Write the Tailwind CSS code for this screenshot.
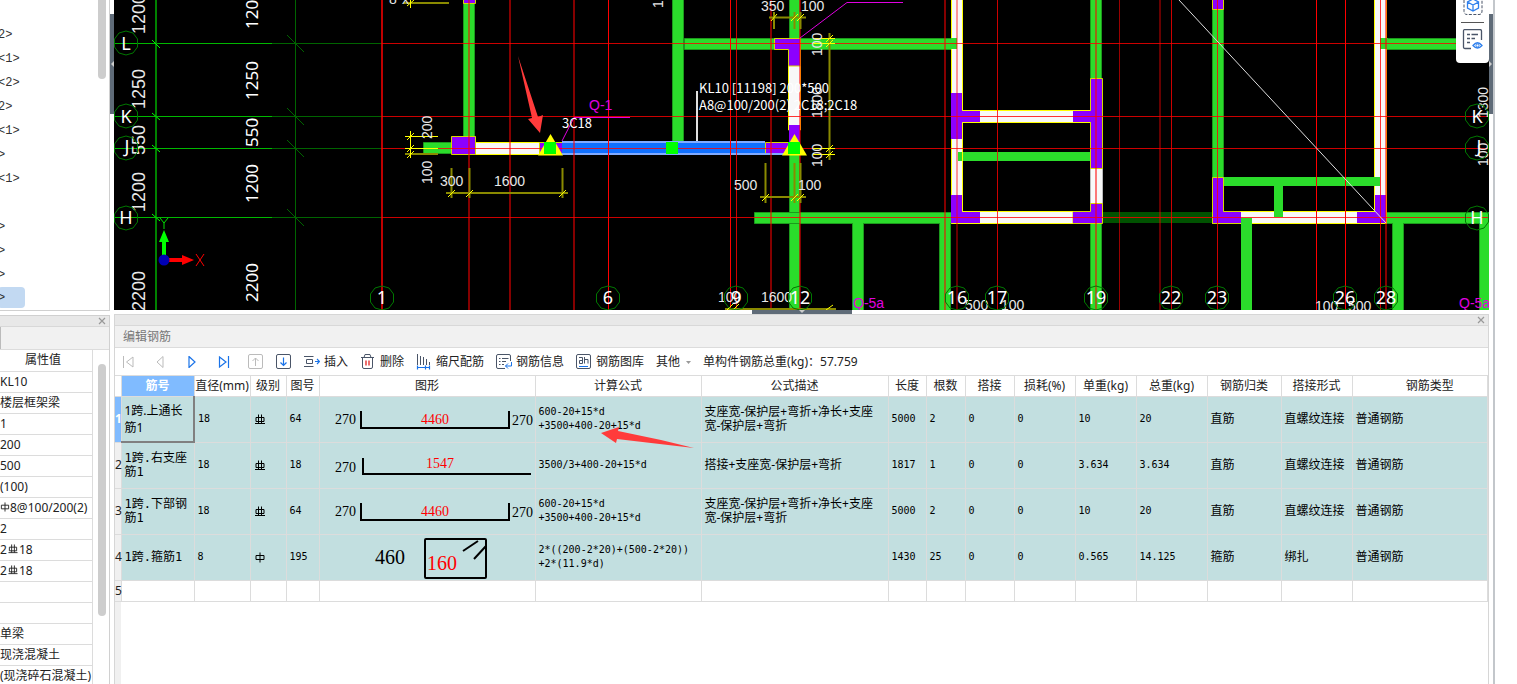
<!DOCTYPE html>
<html lang="zh-CN">
<head>
<meta charset="utf-8">
<title>编辑钢筋</title>
<script src="https://cdn.jsdelivr.net/npm/@tailwindcss/browser@4"></script>
</head>
<body class="bg-white">
<svg width="0" height="0" class="absolute" aria-hidden="true">
  <symbol id="g3" viewBox="0 0 10 11"><path d="M1 3.500H9V7.500H1ZM3.500 0.500V9.500M6.500 0.500V9.500M0 9.500H10" fill="none" stroke="currentColor"/></symbol>
  <symbol id="g1" viewBox="0 0 10 11"><path d="M1 3.500H9V7.500H1ZM5 0.500V10.500" fill="none" stroke="currentColor"/></symbol>
  <symbol id="u64" viewBox="0 0 216 45"><path d="M41 14V31H189V14" fill="none" stroke="#000" stroke-width="2"/></symbol>
</svg>
<div class="flex h-screen overflow-hidden font-['Noto_Sans','Noto_Sans_CJK_SC',sans-serif] text-xs text-[#222]">

  <aside class="flex w-[110px] shrink-0 flex-col overflow-hidden">
    <div class="relative h-[311px] shrink-0 border-r border-b border-[#d0d0d0] bg-white">
      <ul class="pt-[23px] font-['Liberation_Mono','Noto_Sans_CJK_SC',monospace] leading-6 text-[#333]">
        <li class="h-6 -ml-0.5">2&gt;</li>
        <li class="h-6 -ml-0.5">&lt;1&gt;</li>
        <li class="h-6 -ml-0.5">&lt;2&gt;</li>
        <li class="h-6 -ml-0.5">2&gt;</li>
        <li class="h-6 -ml-0.5">&lt;1&gt;</li>
        <li class="h-6 -ml-0.5">&gt;</li>
        <li class="h-6 -ml-0.5">&lt;1&gt;</li>
        <li class="h-6 -ml-0.5"></li>
        <li class="h-6 -ml-0.5">&gt;</li>
        <li class="h-6 -ml-0.5">&gt;</li>
        <li class="h-6 -ml-0.5">&gt;</li>
        <li class="h-[21px] w-[27px] -ml-0.5 rounded bg-[#c2d9f2] leading-[22px]">&gt;</li>
      </ul>
      <div class="absolute top-0 right-[3px] h-[79px] w-2 rounded-b-full bg-[#cdcdcd]"></div>
    </div>
    <div class="mt-1 flex min-h-0 flex-1 flex-col border-t border-r border-[#d0d0d0]">
      <div class="flex h-[11px] shrink-0 items-center justify-end border-b border-[#d8d8d8] bg-[#e8e8e8] pr-[3px]">
        <button aria-label="关闭"><svg class="size-2" viewBox="0 0 8 8"><path d="M1 1L7 7M7 1L1 7" stroke="#999" stroke-width="1.200"/></svg></button>
      </div>
      <div class="h-[23px] shrink-0 border-b border-[#dcdcdc] bg-[#f1f1f1]"><div class="h-full w-px bg-[#bbb]"></div></div>
      <div class="flex min-h-0 flex-1 justify-between overflow-hidden">
        <table class="h-fit w-[93px] table-fixed border-collapse whitespace-nowrap [&_td]:h-[21px] [&_td]:border-r [&_td]:border-b [&_td]:border-[#dcdcdc] [&_td]:p-0 [&_td]:leading-5">
          <thead><tr><th class="h-[21px] border-r border-b border-[#dcdcdc] p-0 pr-1.5 text-center font-normal leading-5">属性值</th></tr></thead>
          <tbody>
            <tr><td>KL10</td></tr>
            <tr><td>楼层框架梁</td></tr>
            <tr><td>1</td></tr>
            <tr><td>200</td></tr>
            <tr><td>500</td></tr>
            <tr><td>(100)</td></tr>
            <tr><td><svg class="inline size-[10px] -mt-0.5"><use href="#g1"/></svg>8@100/200(2)</td></tr>
            <tr><td>2</td></tr>
            <tr><td>2<svg class="-mt-0.5 inline h-[10px] w-3"><use href="#g3"/></svg>18</td></tr>
            <tr><td>2<svg class="-mt-0.5 inline h-[10px] w-3"><use href="#g3"/></svg>18</td></tr>
            <tr><td></td></tr>
            <tr><td></td></tr>
            <tr><td>单梁</td></tr>
            <tr><td>现浇混凝土</td></tr>
            <tr><td>(现浇碎石混凝土)</td></tr>
          </tbody>
        </table>
        <div class="mt-3.5 mr-[3px] h-[252px] w-2 shrink-0 rounded-full bg-[#cdcdcd]"></div>
      </div>
    </div>
  </aside>

  <div class="w-1 shrink-0 pt-3.5">
    <button aria-label="收起左侧" class="flex h-[100px] w-full items-center bg-[#5f6b78]"><svg class="h-2 w-1" viewBox="0 0 4 8"><path d="M4 1V7L1 4Z" fill="#ccc"/></svg></button>
  </div>

  <main class="flex min-w-0 flex-1 flex-col">
    <section class="relative h-[310px] shrink-0 overflow-hidden bg-black" aria-label="绘图区">
      <svg class="block h-full w-full">
        <g transform="translate(-114 0)">
          <g fill="none" stroke="#006400">
            <path d="M272 43.500H382M272 116.500H382M272 148.500H382M272 217.500H382M295.500 0V310"/>
            <path d="M287 35L304 52M287 108L304 125M287 140L304 157M287 209L304 226"/>
            <path d="M114 43.500H272M114 116.500H272M114 148.500H272M114 217.500H272" stroke="#00b800"/>
            <path d="M156 0V310" stroke="#008200" stroke-width="2"/>
            <path d="M152 40L160 48M152 113L160 120M152 145L160 152M152 214L160 221" stroke="#00ff00"/>
          </g>
          <!-- beams -->
          <g fill="#2bdc2b" stroke="#1c9a1c">
            <path d="M463.500 3.500H474.500V136.500H463.500ZM672.500 -1H683.500V148.500H672.500ZM684.500 38.500H957.500V49.500H684.500ZM789.500 -1H799.500V311H789.500ZM423.500 142.500H452.500V153.500H423.500Z"/>
            <path d="M754.500 212.500H957.500V223.500H754.500Z"/>
            <path d="M1090.500 -1H1101.500V78.500H1090.500ZM1090.500 223.500H1101.500V311H1090.500ZM1212.500 9.500H1223.500V177.500H1212.500Z"/>
            <path d="M1386.500 212.500H1492V223.500H1386.500ZM1386.500 38.500H1492V49.500H1386.500Z"/>
            <path d="M852.500 223V311M863.500 223V311M939.500 223V311M950.500 223V311M1392.500 223V311M1403.500 223V311M1479.500 223V311" fill="none"/>
            <path d="M853 222H863V311H853ZM940 222H950V311H940ZM1393 222H1403V311H1393ZM1480 222H1492V311H1480ZM789 212.900H800V223.100H789Z" stroke="none"/>
          </g>
          <path d="M1102 212H1212V223H1102Z" fill="#005200"/>
          <!-- walls -->
          <g fill="#f8f8f8" stroke="#ffff00">
            <path d="M475.500 142.500H545V154.500H475.500ZM788.500 60H800.500V130H788.500Z"/>
            <path d="M951.500 -1H962.500V110.500H1090.500V122.500H962.500V211.500H1090.500V223.500H951.500Z"/>
            <path d="M1090.500 168.500H1102.500V203.500H1090.500Z" stroke="#bbb"/>
            <path d="M1374.500 -1H1386.500V223.500H1212.500V211.500H1374.500Z"/>
          </g>
          <path d="M963 123H1090V211H963Z" fill="#000"/>
          <path d="M958 152H1091V161H958ZM951 38H957V49H951ZM1223 177H1380V186H1223ZM1274 186H1283V217H1274ZM1241 218H1252V310H1241ZM1380 38H1388V49H1380Z" fill="#2bdc2b"/>
          <path d="M962.500 123V211" stroke="#ffff00"/>
          <!-- edge columns -->
          <g fill="#8c00ff">
            <g stroke="#d8d800">
              <path d="M463.500 -1H475.500V3.500H463.500ZM451.500 136.500H475.500V154.500H451.500ZM539.500 142.500H562.500V154.500H539.500Z"/>
              <path d="M774.500 38.500H800.500V66H788.500V49.500H774.500Z"/>
              <path d="M765.500 142.500H790V154.500H765.500Z"/>
              <path d="M1090.500 78.500H1102.500V168.500H1090.500ZM1212.500 -1H1223.500V9.500H1212.500ZM1212.500 177.500H1223.500V211.500H1240V223.500H1212.500ZM1090.500 203.500H1102.500V223.500H1073V211.500H1090.500Z"/>
            </g>
            <path d="M789 125H800V142H789ZM951 93H962V139H951ZM962 111H980V122H962ZM951 195H962V223H951ZM962 212H980V223H962ZM1073 111H1093V122H1073ZM1073 212H1093V223H1073ZM1375 195H1386V223H1375ZM1357 212H1375V223H1357ZM1221 212H1241V223H1221Z"/>
          </g>
          <!-- selected beam -->
          <path d="M562 142H765V154H562Z" fill="#1070ff"/>
          <path d="M562 142H765M562 154H790" stroke="#80aaff" stroke-width="2"/>
          <!-- axis grid -->
          <g stroke="#ff0000" fill="none">
            <path d="M382 43.500H1489M382 116.500H1489M382 148.500H1489M382 217.500H1489" stroke-opacity=".8"/>
            <path d="M736.500 0V310M957 0V310M1160 0V310M1217.500 0V310M1380.500 0V310M997.500 0V310M1171.500 0V310" stroke-opacity=".8"/>
            <path d="M382 0V310" stroke-width="2" stroke-opacity=".75"/>
            <path d="M469 0V310M510 0V310M574 0V310M771 0V310M800 0V310M945 0V310M1096 0V310M1386 0V310" stroke-width="2" stroke-opacity=".52"/>
            <path d="M1119.500 0V310" stroke-opacity=".6"/>
            <path d="M608.500 0V310M730.500 0V310M1316.500 0V310M1345.500 0V310"/>
          </g>
          <path d="M1179 0L1386 223" stroke="#ddd"/>
          <!-- dimension lines -->
          <g stroke="#8a8a00" stroke-width="2" fill="none">
            <path d="M404 3H449M446 193H568M451.500 168V198M469.500 168V198M562.500 168V198"/>
            <path d="M760 197H806M765.500 163V203M794.500 163V203M800.500 163V203M769 17.500H806M774 12V29M794.500 12V29M800.500 12V29"/>
            <path d="M829.500 33V160M725 309H836M405 154H438" />
          </g>
          <g stroke="#ffff00" fill="none">
            <path d="M410.500 131V158M405 136.500H438M405 148.500H438M410.500 0V8M813 38.500H835M813 43.500H835M813 148.500H835M813 154.500H835"/>
            <path d="M448 197L455 190M466 197L473 190M559 197L566 190M407 140L414 133M407 152L414 145M407 158L414 151M407 6L414 0M762 201L769 194M791 201L798 194M797 201L804 194M771 21L777 14M791 21L798 14M797 21L804 14M826 42L833 35M826 47L833 40M826 152L833 145M826 158L833 151M727 310L733 304M733 310L739 304M826 310L833 305"/>
          </g>
          <!-- section marks -->
          <g fill="#ffff00"><path d="M550.500 134L563 155.500H538Z"/><path d="M794.500 134L807 155.500H782Z"/></g>
          <path d="M544 142H556V154H544ZM788 142H800V154H788ZM666 142H678V154H666Z" fill="#00ff00"/>
          <g stroke="#e000e0" fill="none"><path d="M562 141L574 117.500H630M800 38L847 2.500H903"/></g>
          <path d="M697 91V141" stroke="#e0e0e0" stroke-width="2"/>

          <!-- dimension text -->
          <g fill="#e8e8e8" font-family="'Liberation Sans',sans-serif" font-size="18">
            <text transform="translate(145 34) rotate(-90)">1200</text>
            <text transform="translate(145 109) rotate(-90)">1250</text>
            <text transform="translate(145 155) rotate(-90)">550</text>
            <text transform="translate(145 212) rotate(-90)">1200</text>
            <text transform="translate(145 311) rotate(-90)">2200</text>
          </g>
          <g fill="#e8e8e8" font-family="'Liberation Sans',sans-serif" font-size="14">
            <text transform="translate(432 139) rotate(-90)">200</text>
            <text transform="translate(432 184) rotate(-90)">100</text>
            <text transform="translate(663 8) rotate(-90)">100</text>
            <text transform="translate(822 56) rotate(-90)">100</text>
            <text transform="translate(822 118) rotate(-90)">1800</text>
            <text transform="translate(822 167) rotate(-90)">100</text>
            <text transform="translate(1488 118) rotate(-90)">1300</text>
            <text transform="translate(1488 166) rotate(-90)">100</text>
            <text x="440" y="186">300</text><text x="494" y="186">1600</text>
            <text x="734" y="190">500</text><text x="798" y="190">100</text>
            <text x="761" y="11">350</text><text x="801" y="11">100</text>
            <text x="718" y="302">100</text><text x="761" y="302">1600</text>
            <text x="965" y="310">500</text><text x="1001" y="310">100</text>
            <text x="1315" y="311">100</text><text x="1348" y="311">500</text>
            <text x="389" y="4">8</text><text x="402" y="4">x</text>
          </g>
          <g fill="#e000e0" font-family="'Liberation Sans',sans-serif" font-size="14">
            <text x="589" y="110">Q-1</text><text x="853" y="308">Q-5a</text><text x="1459" y="308">Q-5a</text>
          </g>
          <g fill="#fff" font-family="'Noto Sans',sans-serif" font-size="17">
            <text transform="translate(258 29) rotate(-90)">120</text>
            <text transform="translate(258 100) rotate(-90)">1250</text>
            <text transform="translate(258 147) rotate(-90)">550</text>
            <text transform="translate(258 203) rotate(-90)">1200</text>
            <text transform="translate(258 302) rotate(-90)">2200</text>
          </g>
          <g fill="#fff" font-family="'Noto Sans CJK SC',sans-serif" font-size="13">
            <text x="562" y="128">3C18</text>
            <text x="699" y="93">KL10 [11198] 200*500</text>
            <text x="699" y="110">A8@100/200(2) 2C18;2C18</text>
          </g>
          <!-- axis bubbles -->
          <symbol id="bub" viewBox="0 0 26 26"><path d="M13 1L20 3L24.500 9V17L20 23L13 25L6 23L1.500 17V9L6 3Z" fill="none" stroke="#007800"/></symbol>
          <g>
            <use href="#bub" x="113" y="30" width="26" height="26"/><use href="#bub" x="113" y="103" width="26" height="26"/>
            <use href="#bub" x="113" y="135" width="26" height="26"/><use href="#bub" x="113" y="205" width="26" height="26"/>
            <use href="#bub" x="369" y="285" width="26" height="26"/><use href="#bub" x="595" y="285" width="26" height="26"/>
            <use href="#bub" x="723" y="285" width="26" height="26"/><use href="#bub" x="787" y="285" width="26" height="26"/>
            <use href="#bub" x="944" y="285" width="26" height="26"/><use href="#bub" x="984" y="285" width="26" height="26"/>
            <use href="#bub" x="1083" y="285" width="26" height="26"/><use href="#bub" x="1158" y="285" width="26" height="26"/>
            <use href="#bub" x="1204" y="285" width="26" height="26"/><use href="#bub" x="1332" y="285" width="26" height="26"/>
            <use href="#bub" x="1373" y="285" width="26" height="26"/>
            <use href="#bub" x="1464" y="103" width="26" height="26"/><use href="#bub" x="1464" y="135" width="26" height="26"/><use href="#bub" x="1464" y="205" width="26" height="26"/>
          </g>
          <g fill="#fff" font-family="'Noto Sans',sans-serif" font-size="18" text-anchor="middle">
            <text x="126" y="50">L</text><text x="126" y="123">K</text><text x="127" y="153">J</text><text x="126" y="224">H</text>
            <text x="382" y="304">1</text><text x="608" y="304">6</text><text x="736" y="304">9</text><text x="800" y="304">12</text>
            <text x="957" y="304">16</text><text x="997" y="304">17</text><text x="1096" y="304">19</text><text x="1171" y="304">22</text>
            <text x="1217" y="304">23</text><text x="1345" y="304">26</text><text x="1386" y="304">28</text>
            <text x="1477" y="123">K</text><text x="1479" y="153">J</text><text x="1477" y="224">H</text>
          </g>
          <!-- coordinate axes -->
          <path d="M164 258V242" stroke="#00ff00" stroke-width="4"/><path d="M164 230L169 242H159Z" fill="#00ff00"/>
          <path d="M168 260H183" stroke="#ff0000" stroke-width="4"/><path d="M194 260L182 265V255Z" fill="#ff0000"/>
          <circle cx="164" cy="260" r="5.500" fill="#0000b4"/>
          <path d="M160 218L164 223L168 218M164 223V229" fill="none" stroke="#00e000"/>
          <path d="M196 254L204 266M204 254L196 266" stroke="#ff0000"/>
          <path d="M518 56L538 117L543 115L540 133L528 119L532 118Z" fill="#ff3b3b"/>
        </g>
      </svg>
      <div class="absolute top-0 right-0 flex h-[63px] w-[33px] flex-col items-center rounded-b bg-white shadow">
        <button aria-label="三维"><svg class="h-4 w-5" viewBox="0 0 20 16" fill="none"><path d="M1 0V11Q1 14.500 4 14.500H16Q19 14.500 19 11V0" stroke="#4a5568" stroke-dasharray="3 1.500"/><path d="M10 -1L15.500 2V8L10 11L4.500 8V2ZM4.500 2L10 5L15.500 2M10 5V11" stroke="#2f80ed" stroke-width="1.300"/></svg></button>
        <div class="mt-1.5 h-px w-[23px] bg-[#555]"></div>
        <button aria-label="显示设置" class="mt-1.5"><svg class="h-[22px] w-[21px]" viewBox="0 0 21 22" fill="none"><path d="M9 19.500H3Q1.500 19.500 1.500 18V2Q1.500 0.500 3 0.500H18Q19.500 0.500 19.500 2V11" stroke="#4a5568" stroke-width="1.300"/><path d="M5 5.500H8M9.500 5.500H16M5 9.500H8M9.500 9.500H13M5 13.500H8" stroke="#4a5568" stroke-width="1.300"/><path d="M11 16.500Q15.500 11 20 16.500Q15.500 21.500 11 16.500Z" stroke="#2f80ed" stroke-width="1.300"/><circle cx="15.500" cy="16.500" r="1.500" stroke="#2f80ed"/></svg></button>
      </div>
    </section>

    <button aria-label="收起下方" class="ml-[638px] flex h-1 w-[100px] shrink-0 items-center justify-center bg-[#5f6b78]"><svg class="h-1 w-2" viewBox="0 0 8 4"><path d="M1 0H7L4 3Z" fill="#ccc"/></svg></button>

    <section class="relative flex min-h-0 flex-1 flex-col border-x border-t border-[#d6d6d6]">
      <div class="flex h-[11px] shrink-0 items-center justify-end border-b border-[#d8d8d8] bg-[#e8e8e8] pr-[3px]">
        <button aria-label="关闭"><svg class="size-2" viewBox="0 0 8 8"><path d="M1 1L7 7M7 1L1 7" stroke="#999" stroke-width="1.200"/></svg></button>
      </div>
      <h1 class="h-[22px] shrink-0 border-b border-[#dcdcdc] bg-[#f1f1f1] pl-2 leading-[22px] text-[#777]">编辑钢筋</h1>
      <div class="flex h-7 shrink-0 items-center gap-3 border-b border-[#dcdcdc] pt-px pl-[7px] whitespace-nowrap">
        <div class="mr-1.5 flex gap-5">
          <button aria-label="首条"><svg class="size-3" viewBox="0 0 12 12" fill="none" stroke="#bbb"><path d="M1.500 0V12M11 1L4.500 6L11 11Z"/></svg></button>
          <button aria-label="上一条"><svg class="size-3" viewBox="0 0 12 12" fill="none" stroke="#bbb"><path d="M9 0.500L3 6L9 11.500Z"/></svg></button>
          <button aria-label="下一条"><svg class="size-3" viewBox="0 0 12 12" fill="none" stroke="#1a73e8" stroke-width="1.200"><path d="M3 0.500L9 6L3 11.500Z"/></svg></button>
          <button aria-label="末条"><svg class="size-3" viewBox="0 0 12 12" fill="none" stroke="#1a73e8" stroke-width="1.200"><path d="M10.500 0V12M1.500 1L8 6L1.500 11Z"/></svg></button>
        </div>
        <button aria-label="上移"><svg class="size-4" viewBox="0 0 16 16" fill="none" stroke="#bbb"><rect x=".5" y=".5" width="14" height="14" rx="1.500"/><path d="M7.500 12V4M4.500 7L7.500 4L10.500 7"/></svg></button>
        <button aria-label="下移"><svg class="size-4" viewBox="0 0 16 16" fill="none"><rect x=".5" y=".5" width="14" height="14" rx="1.500" stroke="#4a5568"/><path d="M7.500 3.500V11.500M4.500 8.500L7.500 11.500L10.500 8.500" stroke="#1a73e8" stroke-width="1.200"/></svg></button>
        <button class="flex items-center gap-1"><svg class="size-4" viewBox="0 0 16 16" fill="none"><path d="M0 2.500H9.500M2.500 5.500H8.500V9.500H2.500ZM0 12.500H9.500" stroke="#4a5568"/><path d="M11 7.500H15M13 5L15.500 7.500L13 10" stroke="#1a73e8" stroke-width="1.200"/></svg>插入</button>
        <button class="flex items-center gap-1"><svg class="size-4" viewBox="0 0 16 16" fill="none"><path d="M1 3.500H14M4 3.500L5 .500H10L11 3.500M2.500 3.500V13Q2.500 14.500 4 14.500H11Q12.500 14.500 12.500 13V3.500" stroke="#4a5568"/><path d="M6 6.500V11.500M9 6.500V11.500" stroke="#e02020" stroke-width="1.300"/></svg>删除</button>
        <button class="flex items-center gap-1"><svg class="size-4" viewBox="0 0 16 16" fill="none"><path d="M1.500 0V11M4.500 2V11M7.500 3V11M10.500 5V11M13.500 8V11" stroke="#4a5568"/><path d="M1 13.500H14M1.500 11.500V15.500M9.500 11.500V15.500M13.500 11.500V15.500" stroke="#1a73e8" stroke-width="1.200"/></svg>缩尺配筋</button>
        <button class="flex items-center gap-1"><svg class="size-4" viewBox="0 0 16 16" fill="none"><path d="M9 14.500H2Q.500 14.500 .500 13V2Q.500 .500 2 .500H13Q14.500 .500 14.500 2V7" stroke="#4a5568"/><path d="M3 4.500H4.500M6 4.500H12.500M3 7.500H4.500M6 7.500H10M3 10.500H4.500M6 10.500H8" stroke="#4a5568"/><path d="M15.500 8V12H9.500M12 9.500L9.500 12L12 14.500" stroke="#1a73e8"/></svg>钢筋信息</button>
        <button class="flex items-center gap-1"><svg class="size-4" viewBox="0 0 16 16" fill="none"><rect x=".5" y=".5" width="14" height="14" rx="1.500" stroke="#4a5568"/><path d="M3 3.500H6.500V9.500H3.500V6.500H6.500M8.500 3V9.500M8.500 5.500H12V9.500" stroke="#4a5568"/><path d="M3 12.500H12" stroke="#1a73e8"/></svg>钢筋图库</button>
        <button class="flex items-center gap-1.5">其他<svg class="h-[3px] w-[5px]" viewBox="0 0 5 3"><path d="M0 0H5L2.500 3Z" fill="#999"/></svg></button>
        <span>单构件钢筋总重(kg)：57.759</span>
      </div>
      <div class="min-h-0 flex-1 bg-linear-to-r from-[#f0f0f0] from-[6px] to-white to-[6px]">
        <table class="w-full table-fixed border-collapse bg-white [&_td]:border-r [&_td]:border-b [&_td]:border-[#dcdcdc] [&_td]:px-[3px] [&_td]:py-0 [&_td]:text-black [&_th]:border-r [&_th]:border-b [&_th]:border-[#dcdcdc] [&_th]:p-0 [&_th]:whitespace-nowrap [&_th]:font-normal">
          <colgroup><col class="w-[6px]"><col class="w-[73px]"><col class="w-[56px]"><col class="w-[36px]"><col class="w-[33px]"><col class="w-[216px]"><col class="w-[166px]"><col class="w-[187px]"><col class="w-[38px]"><col class="w-[39px]"><col class="w-[49px]"><col class="w-[61px]"><col class="w-[61px]"><col class="w-[71px]"><col class="w-[74px]"><col class="w-[71px]"><col></colgroup>
          <thead>
            <tr class="h-5 leading-[18px] [&>th]:pt-px!"><th></th><th class="bg-[#80bbff] font-bold! text-white">筋号</th><th>直径(mm)</th><th>级别</th><th>图号</th><th>图形</th><th>计算公式</th><th>公式描述</th><th>长度</th><th>根数</th><th>搭接</th><th>损耗(%)</th><th>单重(kg)</th><th>总重(kg)</th><th>钢筋归类</th><th>搭接形式</th><th class="pl-5!">钢筋类型</th></tr>
          </thead>
          <tbody class="font-['DejaVu_Sans_Mono','Noto_Sans_CJK_SC',monospace] text-[10px] leading-3.5">
            <tr class="h-[46px] bg-[#c2dfe0]">
              <th class="bg-[#80bbff] font-['Noto_Sans',sans-serif] text-xs font-bold! text-white">1</th>
              <td class="border-r-2! border-b-2! border-[#808080]! font-['Noto_Sans','Noto_Sans_CJK_SC',sans-serif] text-xs leading-[17px]">1跨.上通长筋1</td><td>18</td><td class="pl-1!"><svg class="h-[11px] w-[10px]"><use href="#g3"/></svg></td><td>64</td>
              <td class="p-0!"><svg class="block h-[45px] w-full" font-family="'Liberation Serif',serif" font-size="14"><use href="#u64" width="216" height="45"/><text x="15" y="27">270</text><text x="101" y="27" fill="#f00">4460</text><text x="192" y="28">270</text></svg></td>
              <td>600-20+15*d<br>+3500+400-20+15*d</td><td class="font-['Noto_Sans','Noto_Sans_CJK_SC',sans-serif] text-xs leading-3.5">支座宽-保护层+弯折+净长+支座宽-保护层+弯折</td><td>5000</td><td>2</td><td>0</td><td>0</td><td>10</td><td>20</td><td class="text-xs">直筋</td><td class="text-xs">直螺纹连接</td><td class="text-xs">普通钢筋</td>
            </tr>
            <tr class="h-[46px] bg-[#c2dfe0]">
              <th class="bg-[#f0f0f0] font-['Noto_Sans',sans-serif] text-xs">2</th>
              <td class="text-xs leading-3.5">1跨.右支座筋1</td><td>18</td><td class="pl-1!"><svg class="h-[11px] w-[10px]"><use href="#g3"/></svg></td><td>18</td>
              <td class="p-0!"><svg class="block h-[45px] w-full" font-family="'Liberation Serif',serif" font-size="14"><path d="M43 15V31H211" fill="none" stroke="#000" stroke-width="2"/><text x="15" y="29">270</text><text x="106" y="25" fill="#f00">1547</text></svg></td>
              <td>3500/3+400-20+15*d</td><td class="font-['Noto_Sans','Noto_Sans_CJK_SC',sans-serif] text-xs leading-3.5">搭接+支座宽-保护层+弯折</td><td>1817</td><td>1</td><td>0</td><td>0</td><td>3.634</td><td>3.634</td><td class="text-xs">直筋</td><td class="text-xs">直螺纹连接</td><td class="text-xs">普通钢筋</td>
            </tr>
            <tr class="h-[46px] bg-[#c2dfe0]">
              <th class="bg-[#f0f0f0] font-['Noto_Sans',sans-serif] text-xs">3</th>
              <td class="text-xs leading-3.5">1跨.下部钢筋1</td><td>18</td><td class="pl-1!"><svg class="h-[11px] w-[10px]"><use href="#g3"/></svg></td><td>64</td>
              <td class="p-0!"><svg class="block h-[45px] w-full" font-family="'Liberation Serif',serif" font-size="14"><use href="#u64" width="216" height="45"/><text x="15" y="27">270</text><text x="101" y="27" fill="#f00">4460</text><text x="192" y="28">270</text></svg></td>
              <td>600-20+15*d<br>+3500+400-20+15*d</td><td class="font-['Noto_Sans','Noto_Sans_CJK_SC',sans-serif] text-xs leading-3.5">支座宽-保护层+弯折+净长+支座宽-保护层+弯折</td><td>5000</td><td>2</td><td>0</td><td>0</td><td>10</td><td>20</td><td class="text-xs">直筋</td><td class="text-xs">直螺纹连接</td><td class="text-xs">普通钢筋</td>
            </tr>
            <tr class="h-[46px] bg-[#c2dfe0]">
              <th class="bg-[#f0f0f0] font-['Noto_Sans',sans-serif] text-xs">4</th>
              <td class="text-xs leading-3.5">1跨.箍筋1</td><td>8</td><td class="pl-1!"><svg class="h-[11px] w-[10px]"><use href="#g1"/></svg></td><td>195</td>
              <td class="p-0!"><svg class="block h-[45px] w-full" font-family="'Liberation Serif',serif" font-size="20"><rect x="105" y="4" width="61" height="39" rx="1" fill="none" stroke="#000" stroke-width="2"/><path d="M143 16L158 6M154 24L166 11" stroke="#000" stroke-width="2"/><text x="55" y="29">460</text><text x="107" y="35" fill="#f00">160</text></svg></td>
              <td>2*((200-2*20)+(500-2*20))<br>+2*(11.9*d)</td><td></td><td>1430</td><td>25</td><td>0</td><td>0</td><td>0.565</td><td>14.125</td><td class="text-xs">箍筋</td><td class="text-xs">绑扎</td><td class="text-xs">普通钢筋</td>
            </tr>
            <tr class="h-[21px]">
              <th class="bg-[#f0f0f0] font-['Noto_Sans',sans-serif] text-xs">5</th><td></td><td></td><td></td><td></td><td></td><td></td><td></td><td></td><td></td><td></td><td></td><td></td><td></td><td></td><td></td><td></td>
            </tr>
          </tbody>
        </table>
      </div>
      <svg class="absolute top-[112px] left-[486px] h-[22px] w-[94px]" viewBox="0 0 94 22" aria-hidden="true"><path d="M0 6L18 0L17 4L60 13L93 21L50 16L16 12L15 16Z" fill="#ff3b3b"/></svg>
    </section>
  </main>

  <div class="w-1 shrink-0 pt-3.5">
    <button aria-label="收起右侧" class="flex h-[100px] w-full items-center bg-[#5f6b78]"><svg class="h-2 w-1" viewBox="0 0 4 8"><path d="M0 1V7L3 4Z" fill="#ccc"/></svg></button>
  </div>
  <div class="mr-[22px] w-0.5 shrink-0 bg-[#c3c7cb]"></div>
</div>
</body>
</html>
